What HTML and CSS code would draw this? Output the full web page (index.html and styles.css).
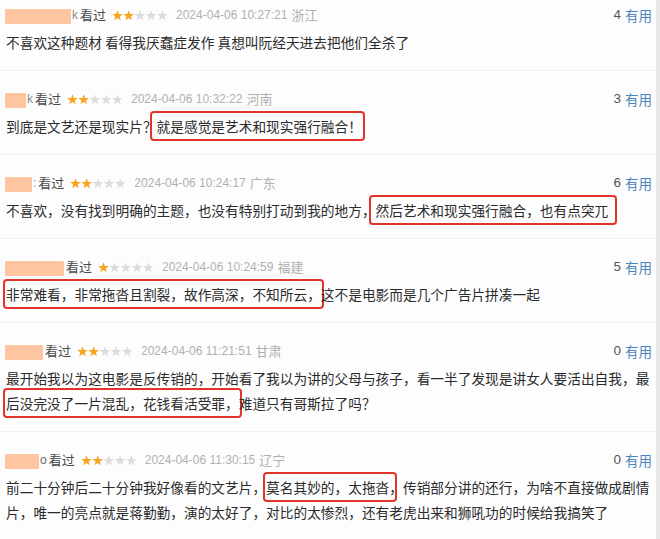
FILE: index.html
```html
<!DOCTYPE html>
<html lang="zh-CN">
<head>
<meta charset="utf-8">
<title>短评</title>
<link rel="stylesheet" href="styles.css">
</head>
<body>
<svg class="defs" width="0" height="0" aria-hidden="true">
  <symbol id="star" viewBox="0 0 11 11">
    <polygon points="5.5,0.2 6.85,3.94 10.83,4.07 7.69,6.51 8.79,10.33 5.5,8.1 2.21,10.33 3.31,6.51 0.17,4.07 4.15,3.94"/>
  </symbol>
</svg>
<div class="page">
  <div class="list">

    <div class="comment first">
      <div class="head">
        <span class="user"><span class="mask m1"></span><span class="frag">k</span></span>
        <span class="watched">看过</span>
        <svg class="stars" viewBox="0 0 56 11"><use href="#star" x="0" width="11" height="11" class="on"/><use href="#star" x="11.2" width="11" height="11" class="on"/><use href="#star" x="22.4" width="11" height="11" class="off"/><use href="#star" x="33.6" width="11" height="11" class="off"/><use href="#star" x="44.8" width="11" height="11" class="off"/></svg>
        <span class="time">2024-04-06 10:27:21</span>
        <span class="loc">浙江</span>
        <span class="votes"><span class="num">4</span><span class="useful">有用</span></span>
      </div>
      <p class="text">不喜欢这种题材 看得我厌蠢症发作 真想叫阮经天进去把他们全杀了</p>
    </div>

    <div class="comment">
      <div class="head">
        <span class="user"><span class="mask m2"></span><span class="frag">k</span></span>
        <span class="watched">看过</span>
        <svg class="stars" viewBox="0 0 56 11"><use href="#star" x="0" width="11" height="11" class="on"/><use href="#star" x="11.2" width="11" height="11" class="on"/><use href="#star" x="22.4" width="11" height="11" class="off"/><use href="#star" x="33.6" width="11" height="11" class="off"/><use href="#star" x="44.8" width="11" height="11" class="off"/></svg>
        <span class="time">2024-04-06 10:32:22</span>
        <span class="loc">河南</span>
        <span class="votes"><span class="num">3</span><span class="useful">有用</span></span>
      </div>
      <p class="text">到底是文艺还是现实片？<span class="hl hl-a">就是感觉是艺术和现实强行融合！</span></p>
    </div>

    <div class="comment">
      <div class="head">
        <span class="user"><span class="mask m3"></span><span class="frag">:</span></span>
        <span class="watched">看过</span>
        <svg class="stars" viewBox="0 0 56 11"><use href="#star" x="0" width="11" height="11" class="on"/><use href="#star" x="11.2" width="11" height="11" class="on"/><use href="#star" x="22.4" width="11" height="11" class="off"/><use href="#star" x="33.6" width="11" height="11" class="off"/><use href="#star" x="44.8" width="11" height="11" class="off"/></svg>
        <span class="time">2024-04-06 10:24:17</span>
        <span class="loc">广东</span>
        <span class="votes"><span class="num">6</span><span class="useful">有用</span></span>
      </div>
      <p class="text">不喜欢，没有找到明确的主题，也没有特别打动到我的地方，<span class="hl hl-b">然后艺术和现实强行融合，也有点突兀</span></p>
    </div>

    <div class="comment">
      <div class="head">
        <span class="user"><span class="mask m4"></span></span>
        <span class="watched">看过</span>
        <svg class="stars" viewBox="0 0 56 11"><use href="#star" x="0" width="11" height="11" class="on"/><use href="#star" x="11.2" width="11" height="11" class="off"/><use href="#star" x="22.4" width="11" height="11" class="off"/><use href="#star" x="33.6" width="11" height="11" class="off"/><use href="#star" x="44.8" width="11" height="11" class="off"/></svg>
        <span class="time">2024-04-06 10:24:59</span>
        <span class="loc">福建</span>
        <span class="votes"><span class="num">5</span><span class="useful">有用</span></span>
      </div>
      <p class="text"><span class="hl">非常难看，非常拖沓且割裂，故作高深，不知所云，</span>这不是电影而是几个广告片拼凑一起</p>
    </div>

    <div class="comment">
      <div class="head">
        <span class="user"><span class="mask m5"></span></span>
        <span class="watched">看过</span>
        <svg class="stars" viewBox="0 0 56 11"><use href="#star" x="0" width="11" height="11" class="on"/><use href="#star" x="11.2" width="11" height="11" class="on"/><use href="#star" x="22.4" width="11" height="11" class="off"/><use href="#star" x="33.6" width="11" height="11" class="off"/><use href="#star" x="44.8" width="11" height="11" class="off"/></svg>
        <span class="time">2024-04-06 11:21:51</span>
        <span class="loc">甘肃</span>
        <span class="votes"><span class="num">0</span><span class="useful">有用</span></span>
      </div>
      <p class="text">最开始我以为这电影是反传销的，开始看了我以为讲的父母与孩子，看一半了发现是讲女人要活出自我，最<br><span class="hl">后没完没了一片混乱，花钱看活受罪，</span>难道只有哥斯拉了吗？</p>
    </div>

    <div class="comment">
      <div class="head">
        <span class="user"><span class="mask m6"></span><span class="frag latin">o</span></span>
        <span class="watched">看过</span>
        <svg class="stars" viewBox="0 0 56 11"><use href="#star" x="0" width="11" height="11" class="on"/><use href="#star" x="11.2" width="11" height="11" class="on"/><use href="#star" x="22.4" width="11" height="11" class="off"/><use href="#star" x="33.6" width="11" height="11" class="off"/><use href="#star" x="44.8" width="11" height="11" class="off"/></svg>
        <span class="time">2024-04-06 11:30:15</span>
        <span class="loc">辽宁</span>
        <span class="votes"><span class="num">0</span><span class="useful">有用</span></span>
      </div>
      <p class="text">前二十分钟后二十分钟我好像看的文艺片，<span class="hl hl-c">莫名其妙的，太拖沓</span>，传销部分讲的还行，为啥不直接做成剧情<br>片，唯一的亮点就是蒋勤勤，演的太好了，对比的太惨烈，还有老虎出来和狮吼功的时候给我搞笑了</p>
    </div>

  </div>
  <div class="rail"></div>
</div>
</body>
</html>
```

FILE: styles.css
```css
* { box-sizing: border-box; }

html, body {
  margin: 0;
  padding: 0;
  background: #fdfdfe;
}

body {
  font-family: "Noto Sans CJK SC", "Noto Sans", sans-serif;
  color: #333;
  width: 660px;
  height: 539px;
  overflow: hidden;
}

.defs { position: absolute; width: 0; height: 0; }

.page {
  display: flex;
  height: 539px;
}

.list {
  flex: 1;
  min-width: 0;
}

.rail {
  width: 4px;
  background: #e8e8ea;
}

.comment {
  padding: 17px 4px 15px 6px;
  border-bottom: 1px solid #f2f2f4;
}

.comment.first {
  padding-top: 4px;
}

.head {
  display: flex;
  align-items: center;
  height: 22px;
  font-size: 13px;
  line-height: 22px;
  margin-left: -1px;
}

.user {
  display: flex;
  align-items: center;
  margin-right: 2px;
}

.mask {
  display: block;
  height: 15px;
  margin-top: 2px;
  background: #fdc5a0;
  border-radius: 1px;
}

.m1 { width: 66px; }
.m2 { width: 21px; }
.m3 { width: 27px; }
.m4 { width: 59px; }
.m5 { width: 38px; }
.m6 { width: 34px; }

.frag {
  display: block;
  color: #8a8a8a;
  font-family: "Liberation Sans", sans-serif;
  font-size: 12px;
  margin-left: 1px;
}

.frag.latin {
  color: #666;
}

.watched {
  color: #494949;
  margin-right: 6px;
}

.stars {
  width: 56px;
  height: 11px;
  margin-right: 8px;
}

.stars .on { fill: #f5a51f; }
.stars .off { fill: #dcdcdc; }

.time {
  font-family: "Liberation Sans", Arial, sans-serif;
  font-size: 12px;
  color: #b0b0b0;
  margin-right: 4px;
}

.loc {
  color: #b0b0b0;
  font-size: 13px;
}

.votes {
  margin-left: auto;
  display: flex;
  align-items: center;
  font-size: 13.5px;
}

.num {
  font-family: "Liberation Sans", Arial, sans-serif;
  color: #555;
  margin-right: 4px;
}

.useful {
  color: #4a86bd;
}

.text {
  margin: 4px 0 0;
  font-size: 13.7px;
  line-height: 25px;
  color: #2b2b2b;
  white-space: nowrap;
}

.hl {
  border: 2px solid #e3342b;
  border-radius: 4px;
  padding: 3px 1px;
  margin: 0 -3px;
}

.hl-a {
  padding-left: 5px;
  margin-left: -7px;
}

.hl-b {
  padding-left: 5px;
  padding-right: 7px;
  margin-left: -7px;
  margin-right: -9px;
}

.hl-c {
  padding-right: 6px;
  margin-right: -8px;
}
```
